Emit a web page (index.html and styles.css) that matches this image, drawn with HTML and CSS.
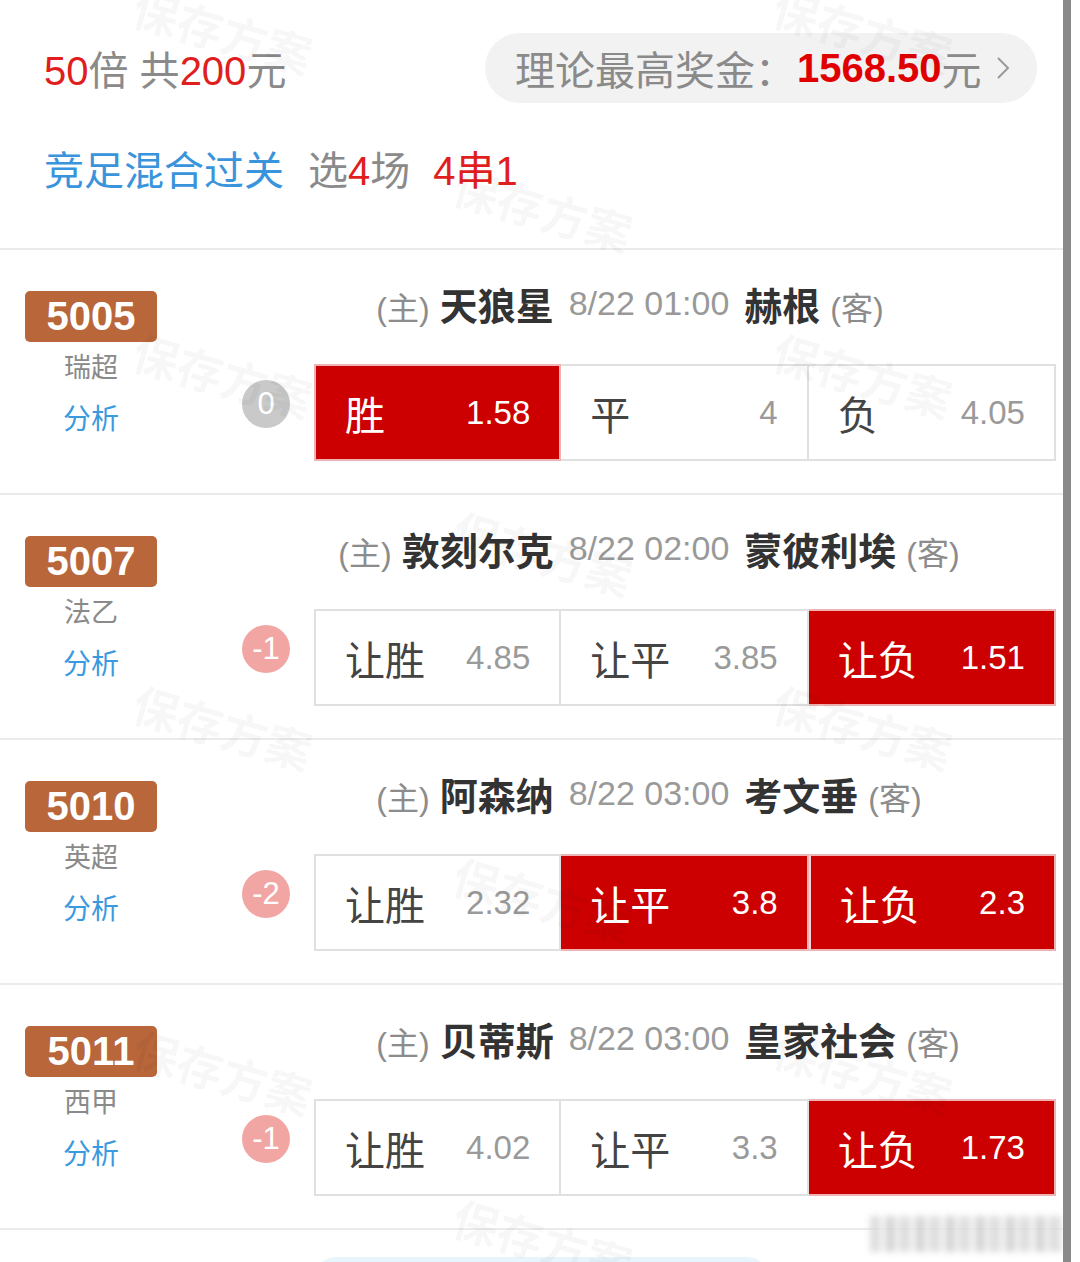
FILE: index.html
```html
<!DOCTYPE html>
<html lang="zh-CN">
<head>
<meta charset="utf-8">
<title>方案详情</title>
<link rel="stylesheet" href="styles.css">
</head>
<body>
<div class="page">
  <main class="main">
    <header class="summary">
      <div class="summary-top">
        <div class="cost"><span class="red">50</span>倍 共<span class="red">200</span>元</div>
        <div class="prize">
          <span>理论最高奖金：</span><span class="prize-amount">1568.50</span><span>元</span>
          <svg class="chev" viewBox="0 0 14 26" width="14" height="26"><polyline points="2,3 12,13 2,23" fill="none" stroke="#9a9a9a" stroke-width="2"/></svg>
        </div>
      </div>
      <div class="summary-play">
        <span class="play-type">竞足混合过关</span>
        <span class="play-count">选<span class="red">4</span>场</span>
        <span class="play-pass">4串1</span>
      </div>
    </header>

    <section class="match">
      <div class="info">
        <div class="num">5005</div>
        <div class="league">瑞超</div>
        <div class="analysis">分析</div>
      </div>
      <div class="detail">
        <div class="teams">
          <div class="home"><span class="tag">(主)</span><b>天狼星</b></div>
          <div class="time">8/22 01:00</div>
          <div class="away"><b>赫根</b><span class="tag">(客)</span></div>
        </div>
        <div class="bets">
          <div class="hcap hcap-zero">0</div>
          <div class="odds">
            <div class="odd sel"><span class="lbl">胜</span><span class="val">1.58</span></div>
            <div class="odd"><span class="lbl">平</span><span class="val">4</span></div>
            <div class="odd"><span class="lbl">负</span><span class="val">4.05</span></div>
          </div>
        </div>
      </div>
    </section>

    <section class="match">
      <div class="info">
        <div class="num">5007</div>
        <div class="league">法乙</div>
        <div class="analysis">分析</div>
      </div>
      <div class="detail">
        <div class="teams">
          <div class="home"><span class="tag">(主)</span><b>敦刻尔克</b></div>
          <div class="time">8/22 02:00</div>
          <div class="away"><b>蒙彼利埃</b><span class="tag">(客)</span></div>
        </div>
        <div class="bets">
          <div class="hcap">-1</div>
          <div class="odds">
            <div class="odd"><span class="lbl">让胜</span><span class="val">4.85</span></div>
            <div class="odd"><span class="lbl">让平</span><span class="val">3.85</span></div>
            <div class="odd sel"><span class="lbl">让负</span><span class="val">1.51</span></div>
          </div>
        </div>
      </div>
    </section>

    <section class="match">
      <div class="info">
        <div class="num">5010</div>
        <div class="league">英超</div>
        <div class="analysis">分析</div>
      </div>
      <div class="detail">
        <div class="teams">
          <div class="home"><span class="tag">(主)</span><b>阿森纳</b></div>
          <div class="time">8/22 03:00</div>
          <div class="away"><b>考文垂</b><span class="tag">(客)</span></div>
        </div>
        <div class="bets">
          <div class="hcap">-2</div>
          <div class="odds">
            <div class="odd"><span class="lbl">让胜</span><span class="val">2.32</span></div>
            <div class="odd sel"><span class="lbl">让平</span><span class="val">3.8</span></div>
            <div class="odd sel"><span class="lbl">让负</span><span class="val">2.3</span></div>
          </div>
        </div>
      </div>
    </section>

    <section class="match">
      <div class="info">
        <div class="num">5011</div>
        <div class="league">西甲</div>
        <div class="analysis">分析</div>
      </div>
      <div class="detail">
        <div class="teams">
          <div class="home"><span class="tag">(主)</span><b>贝蒂斯</b></div>
          <div class="time">8/22 03:00</div>
          <div class="away"><b>皇家社会</b><span class="tag">(客)</span></div>
        </div>
        <div class="bets">
          <div class="hcap">-1</div>
          <div class="odds">
            <div class="odd"><span class="lbl">让胜</span><span class="val">4.02</span></div>
            <div class="odd"><span class="lbl">让平</span><span class="val">3.3</span></div>
            <div class="odd sel"><span class="lbl">让负</span><span class="val">1.73</span></div>
          </div>
        </div>
      </div>
    </section>

    <div class="footer">
      <div class="footer-btn"></div>
    </div>

    <div class="watermarks" aria-hidden="true">
      <span class="wm wm-a1">保存方案</span>
      <span class="wm wm-c1">保存方案</span>
      <span class="wm wm-b1">保存方案</span>
      <span class="wm wm-a2">保存方案</span>
      <span class="wm wm-c2">保存方案</span>
      <span class="wm wm-b2">保存方案</span>
      <span class="wm wm-a3">保存方案</span>
      <span class="wm wm-c3">保存方案</span>
      <span class="wm wm-b3">保存方案</span>
      <span class="wm wm-a4">保存方案</span>
      <span class="wm wm-c4">保存方案</span>
      <span class="wm wm-b4">保存方案</span>
    </div>
    <div class="blur-float" aria-hidden="true"></div>
  </main>
  <div class="scrollbar"></div>
</div>
</body>
</html>
```

FILE: styles.css
```css
html, body {
  margin: 0;
  padding: 0;
  background: #ffffff;
  height: 1262px;
  overflow: hidden;
}

body {
  font-family: "Liberation Sans", "Noto Sans CJK SC", sans-serif;
  color: #333;
}

.page {
  display: flex;
  width: 1080px;
  height: 1262px;
}

.main {
  position: relative;
  width: 1063px;
  height: 1262px;
  overflow: hidden;
}

.scrollbar {
  width: 8px;
  height: 1262px;
  background: #8a8a8a;
}

.red { color: #e01e1e; }

/* ---------- summary ---------- */
.summary {
  padding: 33px 26px 55px 44px;
  border-bottom: 2px solid #ebebeb;
}

.summary-top {
  display: flex;
  align-items: center;
  justify-content: space-between;
  height: 70px;
}

.cost {
  font-size: 40px;
  color: #8a8a8a;
  white-space: nowrap;
}

.prize {
  display: flex;
  align-items: center;
  height: 70px;
  width: 552px;
  box-sizing: border-box;
  padding: 0 26px 0 30px;
  border-radius: 35px;
  background: #f2f2f2;
  font-size: 40px;
  color: #8a8a8a;
  white-space: nowrap;
}

.prize-amount {
  color: #e00000;
  font-weight: bold;
  font-size: 40px;
  margin-left: 2px;
}

.chev {
  margin-left: 14px;
}

.summary-play {
  display: flex;
  align-items: center;
  height: 50px;
  margin-top: 40px;
  font-size: 40px;
  white-space: nowrap;
}

.play-type { color: #3a94db; }
.play-count { color: #8a8a8a; margin-left: 24px; }
.play-pass { color: #e01e1e; margin-left: 23px; }

/* ---------- match ---------- */
.match {
  display: flex;
  height: 243px;
  padding: 0 7px 0 25px;
  border-bottom: 2px solid #ebebeb;
}

.info {
  width: 132px;
  padding-top: 41px;
  display: flex;
  flex-direction: column;
  align-items: center;
}

.num {
  width: 132px;
  height: 51px;
  line-height: 51px;
  border-radius: 5px;
  background: #b8663a;
  color: #fff;
  font-weight: bold;
  font-size: 40px;
  text-align: center;
}

.league {
  margin-top: 6px;
  height: 40px;
  line-height: 40px;
  font-size: 27px;
  color: #8a8a8a;
}

.analysis {
  margin-top: 12px;
  height: 40px;
  line-height: 40px;
  font-size: 28px;
  color: #3a9ae0;
}

.detail {
  flex: 1;
  margin-left: 85px;
  padding-top: 26px;
}

.teams {
  display: grid;
  grid-template-columns: 1fr auto 1fr;
  align-items: center;
  column-gap: 15px;
  height: 50px;
  white-space: nowrap;
}

.teams b {
  font-weight: bold;
  font-size: 38px;
  color: #333;
}

.tag {
  font-size: 32px;
  color: #8c8c8c;
}

.home { text-align: right; }
.home .tag { margin-right: 10px; }
.away { text-align: left; }
.away .tag { margin-left: 10px; }

.time {
  font-size: 34px;
  color: #999;
}

.bets {
  display: flex;
  margin-top: 38px;
}

.hcap {
  width: 48px;
  height: 48px;
  margin-top: 16px;
  margin-right: 24px;
  border-radius: 50%;
  background: #f2a6a3;
  color: #fff;
  font-size: 31px;
  line-height: 48px;
  text-align: center;
  flex: none;
}

.hcap-zero { background: #c9c9c9; }

.odds {
  flex: 1;
  display: grid;
  grid-template-columns: repeat(3, 1fr);
  height: 97px;
}

.odd {
  display: flex;
  align-items: center;
  justify-content: space-between;
  padding: 0 29px;
  border: 2px solid #e0e0e0;
  background: #fff;
}

.odd + .odd { border-left: none; }

.lbl {
  font-size: 40px;
  color: #444;
}

.val {
  font-size: 33px;
  color: #9a9a9a;
}

.odd.sel {
  background: #cc0000;
  border-color: #ecb4b4;
}

.odd.sel + .odd.sel { border-left: 2px solid #f3d2d2; }

.odd.sel .lbl,
.odd.sel .val { color: #fff; }

/* ---------- footer ---------- */
.footer {
  padding-top: 27px;
  padding-left: 314px;
}

.footer-btn {
  width: 455px;
  height: 60px;
  border-radius: 22px;
  background: #e9f5fd;
}

/* ---------- overlays ---------- */
.watermarks {
  position: absolute;
  inset: 0;
  pointer-events: none;
}

.wm {
  position: absolute;
  width: 210px;
  margin-left: -105px;
  margin-top: -30px;
  text-align: center;
  font-size: 46px;
  font-weight: bold;
  line-height: 60px;
  color: rgba(0, 0, 0, 0.045);
  transform: rotate(16deg);
  white-space: nowrap;
}

.wm-a1 { left: 222px; top: 34px; }
.wm-c1 { left: 862px; top: 34px; }
.wm-b1 { left: 542px; top: 212px; }
.wm-a2 { left: 222px; top: 378px; }
.wm-c2 { left: 862px; top: 378px; }
.wm-b2 { left: 542px; top: 556px; }
.wm-a3 { left: 222px; top: 730px; }
.wm-c3 { left: 862px; top: 730px; }
.wm-b3 { left: 542px; top: 902px; }
.wm-a4 { left: 222px; top: 1075px; }
.wm-c4 { left: 862px; top: 1075px; }
.wm-b4 { left: 542px; top: 1244px; }

.blur-float {
  position: absolute;
  left: 870px;
  top: 1216px;
  width: 193px;
  height: 36px;
  background: repeating-linear-gradient(90deg, #d6d6d6 0 10px, #f4f4f4 10px 16px, #c9c9c9 16px 24px, #ededed 24px 30px);
  filter: blur(3px);
  opacity: 0.8;
}
```
